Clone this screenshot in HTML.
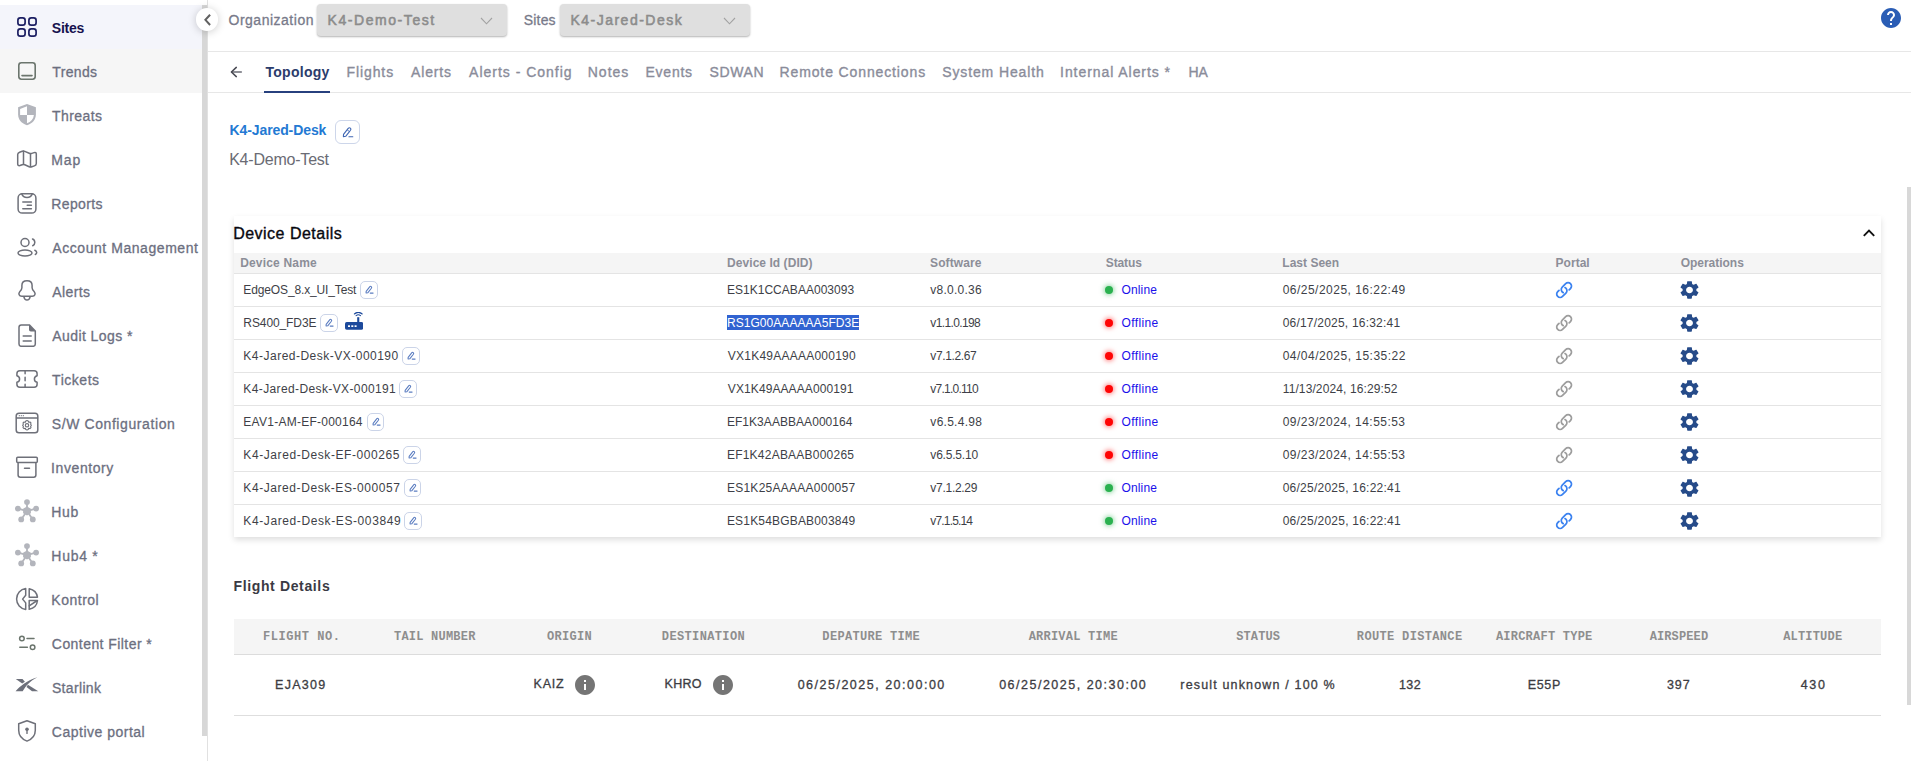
<!DOCTYPE html>
<html>
<head>
<meta charset="utf-8">
<title>Sites</title>
<style>
*{box-sizing:border-box;margin:0;padding:0}
html,body{width:1911px;height:761px;overflow:hidden;background:#fff}
body{font-family:"Liberation Sans",sans-serif;position:relative;color:#3f4048}
.a{position:absolute}
.t{position:absolute;white-space:nowrap;line-height:1}
.m{font-family:"Liberation Mono",monospace}
.b{font-weight:bold}
.nv{position:absolute;left:15px;width:24px;height:24px}
.sel{position:absolute;top:4px;height:31.500px;width:189.500px;background:#dfdfdf;border-radius:4px;box-shadow:0 1px 2px rgba(0,0,0,.3)}
.hl{position:absolute;left:208px;right:0;height:1px;background:#e7e7e7}
#card{position:absolute;left:233.500px;top:216px;width:1647.500px;height:321px;background:#fff;box-shadow:0 2.500px 6px rgba(0,0,0,.13)}
.rl{position:absolute;left:234px;width:1647px;height:1px;background:#e4e4e4}
.eb{position:absolute;width:17.500px;height:17.500px;border:1px solid #cbd4e8;border-radius:5px;background:#fff}
.dot{position:absolute;left:1104.700px;width:8.500px;height:8.500px;border-radius:50%}
.on{background:#2ab14f;box-shadow:0 0 5px 1px rgba(42,177,79,.55)}
.off{background:#ff0505;box-shadow:0 0 5px 1px rgba(255,5,5,.55)}
</style>
</head>
<body>
<div id="side">
<div class="a" style="left:0;top:5px;width:202px;height:44px;background:#f4f5fb"></div>
<div class="a" style="left:0;top:49px;width:202px;height:44px;background:#f6f6f6"></div>
<svg class="nv" style="top:15px" viewBox="0 0 24 24"><g fill="none" stroke="#1c1f63" stroke-width="1.7"><rect x="2.9" y="2.9" width="7.2" height="7.2" rx="2.4"/><rect x="13.9" y="2.9" width="7.2" height="7.2" rx="2.4"/><rect x="2.9" y="13.9" width="7.2" height="7.2" rx="2.4"/><rect x="13.9" y="13.9" width="7.2" height="7.2" rx="2.4"/></g></svg>
<svg class="nv" style="top:59px" viewBox="0 0 24 24"><g fill="none" stroke="#6b756d" stroke-width="1.6" stroke-linecap="round"><rect x="3.8" y="3.8" width="16.4" height="16.4" rx="2.6"/><path d="M7 16.6h10"/></g></svg>
<svg class="nv" style="top:103px" viewBox="0 0 24 24"><path d="M12 .9 3.100 4.300v6.900c0 5.400 3.600 9.300 8.900 11.100 5.300-1.800 8.900-5.700 8.900-11.100V4.300z" fill="#b3b5bc"/><path d="M12 3.300v8.600H5.100V5.900z M12 11.900h6.900c-.3 3.900-2.900 6.700-6.900 8.400z" fill="#fff"/></svg>
<svg class="nv" style="top:147px" viewBox="0 0 24 24"><g fill="none" stroke="#6e7079" stroke-width="1.5" stroke-linecap="round" stroke-linejoin="round"><path d="M2.700 7.600c0-1.300.7-2 1.900-2.400l2.600-.9c.9-.3 1.700-.3 2.600.1l4.400 1.900c.9.4 1.700.4 2.600.1l2.300-.8c1.300-.4 2.200.2 2.200 1.600v9.300c0 1.300-.7 2-1.900 2.400l-2.600.9c-.9.300-1.700.3-2.600-.1l-4.400-1.900c-.9-.4-1.700-.4-2.600-.1l-2.300.8c-1.300.4-2.200-.2-2.200-1.600z"/><path d="M8.500 4.300v12.800M15.500 6.700v12.900"/></g></svg>
<svg class="nv" style="top:191px" viewBox="0 0 24 24"><g fill="none" stroke="#6e7079" stroke-width="1.5" stroke-linecap="round" stroke-linejoin="round"><rect x="3.100" y="2.700" width="17.800" height="19.400" rx="4.200"/><path d="M6.800 3c.8 2.300 2.600 3.500 5.200 3.500s4.400-1.200 5.200-3.500"/><path d="M7.800 10.900h8.600M12.200 14.300h4.200M7.800 17.800h8.600"/></g></svg>
<svg class="nv" style="top:235px" viewBox="0 0 24 24"><g fill="none" stroke="#6e7079" stroke-width="1.5" stroke-linecap="round" stroke-linejoin="round"><circle cx="10" cy="7.500" r="4"/><ellipse cx="10" cy="18" rx="7" ry="3"/><path d="M17.500 4c1.500.5 2.300 1.900 2.300 3.400s-.8 2.700-2.100 3.300"/><path d="M19.800 15.300c1.200.5 1.900 1.300 1.900 2.200 0 .8-.5 1.500-1.400 2"/></g></svg>
<svg class="nv" style="top:279px" viewBox="0 0 24 24"><g fill="none" stroke="#6e7079" stroke-width="1.5" stroke-linecap="round" stroke-linejoin="round"><path d="M12 1.700C8.600 1.700 6.900 3.600 6.900 6.400V8.800C6.900 10.600 5.600 11.800 4.600 12.900 3.200 14.500 4 17.300 6.800 17.300H17.200C20 17.300 20.800 14.500 19.400 12.900 18.400 11.800 17.100 10.600 17.100 8.800V6.400C17.100 3.600 15.400 1.700 12 1.700z"/><path d="M8.800 17.700c.5 2.300 1.700 3.400 3.200 3.400s2.700-1.100 3.200-3.400"/></g></svg>
<svg class="nv" style="top:323px" viewBox="0 0 24 24"><g fill="none" stroke="#6e7079" stroke-width="1.5" stroke-linecap="round" stroke-linejoin="round" stroke-width="1.600"><path d="M4 4.200c0-1.400.9-2.300 2.300-2.300h8L20.300 8v13c0 1.400-.9 2.300-2.300 2.300H6.300c-1.400 0-2.300-.9-2.300-2.300z"/><path d="M8.200 13h8M8.200 18h8"/></g><path d="M14 2v4.500c0 1.200.7 1.900 1.900 1.900h4.400z" fill="#6e7079"/></svg>
<svg class="nv" style="top:367px" viewBox="0 0 24 24"><g fill="none" stroke="#6e7079" stroke-width="1.5" stroke-linecap="round" stroke-linejoin="round"><path d="M4.900 3.800h14.200c1.800 0 3 1.200 3 3v1.900c-1.700.4-2.700 1.600-2.700 3.300s1 2.900 2.700 3.300v1.900c0 1.800-1.200 3-3 3H4.900c-1.800 0-3-1.200-3-3v-1.900c1.700-.4 2.700-1.600 2.700-3.300S3.600 9.100 1.900 8.700V6.800c0-1.800 1.200-3 3-3z"/><path d="M10.100 4v2.800M10.100 10.300v3.400M10.100 17.200V20"/></g></svg>
<svg class="nv" style="top:411px" viewBox="0 0 24 24"><g fill="none" stroke="#6e7079" stroke-width="1.5" stroke-linecap="round" stroke-linejoin="round" stroke-width="1.400"><rect x="1.200" y="2.300" width="21.600" height="19.400" rx="2.800"/><path d="M1.500 7h21"/><circle cx="12" cy="14.300" r="1.700" stroke-width="1.100"/><path stroke-width="1.100" d="M12 9.600l1.200.4.500 1.300 1.300-.3 1 .9-.4 1.300.8 1.100-.8 1.100.4 1.300-1 .9-1.300-.3-.5 1.300-1.200.4-1.200-.4-.5-1.300-1.300.3-1-.9.400-1.300-.8-1.100.8-1.100-.4-1.300 1-.9 1.300.3.500-1.300z"/></g><g fill="#6e7079"><circle cx="4.300" cy="4.700" r=".6"/><circle cx="6.300" cy="4.700" r=".6"/><circle cx="8.300" cy="4.700" r=".6"/></g></svg>
<svg class="nv" style="top:455px" viewBox="0 0 24 24"><g fill="none" stroke="#6e7079" stroke-width="1.5" stroke-linecap="round" stroke-linejoin="round" stroke-width="1.700"><rect x="1.700" y="2.300" width="20.600" height="5.300" rx="1"/><path d="M3.100 7.800v12.300c0 1.400.8 2.200 2.200 2.200h13.400c1.400 0 2.200-.8 2.200-2.200V7.800"/><path d="M9.500 13.200h5"/></g></svg>
<svg class="nv" style="top:499px" viewBox="0 0 24 24"><g stroke="#b3b5bc" stroke-width="1.800" stroke-linecap="round"><path d="M12 12.100V3.500M12 12.100 3.300 9.600M12 12.100l8.700-2.500M12 12.100 6.400 20.200M12 12.100l5.600 8.100"/></g><g fill="#b3b5bc"><path d="M12 7.600l3.900 2.200v4.500L12 16.600l-3.900-2.300V9.800z"/><circle cx="12" cy="3.100" r="2.900"/><circle cx="2.900" cy="9.600" r="2.900"/><circle cx="21.100" cy="9.600" r="2.900"/><circle cx="6.200" cy="20.400" r="2.900"/><circle cx="17.800" cy="20.400" r="2.900"/></g></svg>
<svg class="nv" style="top:543px" viewBox="0 0 24 24"><g stroke="#b3b5bc" stroke-width="1.800" stroke-linecap="round"><path d="M12 12.100V3.500M12 12.100 3.300 9.600M12 12.100l8.700-2.500M12 12.100 6.400 20.200M12 12.100l5.600 8.100"/></g><g fill="#b3b5bc"><path d="M12 7.600l3.900 2.200v4.500L12 16.600l-3.900-2.300V9.800z"/><circle cx="12" cy="3.100" r="2.900"/><circle cx="2.900" cy="9.600" r="2.900"/><circle cx="21.100" cy="9.600" r="2.900"/><circle cx="6.200" cy="20.400" r="2.900"/><circle cx="17.800" cy="20.400" r="2.900"/></g></svg>
<svg class="nv" style="top:587px" viewBox="0 0 24 24"><g fill="none" stroke="#6e7079" stroke-width="1.5" stroke-linecap="round" stroke-linejoin="round" stroke-width="1.700"><path d="M10.700 1.600C5.500 2.300 1.600 6.600 1.600 12s3.900 9.700 9.100 10.400V15.900L7.600 12.100l3.100-3.800z"/><path d="M14.200 1.700c4.400.9 7.700 4.100 8.300 8.500h-8.300z"/><path d="M14.200 13.500h8.300c-.5 4.400-3.800 7.900-8.300 8.800z"/><path d="M14.200 18.800l7.300-4.800"/></g></svg>
<svg class="nv" style="top:631px" viewBox="0 0 24 24"><g fill="none" stroke="#6b756d" stroke-width="1.500" stroke-linecap="round"><circle cx="6.900" cy="7.500" r="2.300"/><path d="M12 7.500h7"/><circle cx="17.600" cy="16.200" r="2.300"/><path d="M4.800 16.200h7.600"/></g></svg>
<svg class="nv" style="top:675px" viewBox="0 0 24 24"><g fill="#6d707b"><path d="M.6 16.300C5 11 12 5.500 22.400 2.200 15 6 10.500 11 7.700 16.300z"/><path d="M.8 4h6.700l2.400 2.800-2.700 1.600z"/><path d="M12.900 9.700 23.300 16.300H17l-5.500-4.400z"/></g></svg>
<svg class="nv" style="top:719px" viewBox="0 0 24 24"><g fill="none" stroke="#6e7079" stroke-width="1.5" stroke-linecap="round" stroke-linejoin="round"><path d="M12 1.700 3.700 4.800v6.500c0 5.200 3.300 9 8.300 10.800 5-1.800 8.300-5.600 8.300-10.800V4.800z"/></g><g fill="#6e7079"><circle cx="12" cy="10.300" r="1.800"/><rect x="11.300" y="10.800" width="1.400" height="4.200" rx=".6"/></g></svg>
<div class="a" style="left:202px;top:5px;width:5px;height:730.600px;background:#d7d7d7"></div>
<div class="a" style="left:207px;top:0;width:1px;height:761px;background:#e1e1e1"></div>
</div>
<div class="a" style="left:195.700px;top:7.900px;width:22.800px;height:22.800px;border-radius:50%;background:#fff;box-shadow:0 1px 8px rgba(0,0,0,.2)"></div>
<svg class="a" style="left:196px;top:8px" width="22" height="22" viewBox="0 0 22 22"><path d="M14.100 6.750 9.400 11.850 14.100 16.950" fill="none" stroke="#616161" stroke-width="2"/></svg>
<div class="sel" style="left:317.250px"></div>
<svg class="a" style="left:479.7px;top:16.500px" width="13" height="8" viewBox="0 0 13 8"><path d="M1 1 6.500 6.800 12 1" fill="none" stroke="#a2a2a2" stroke-width="1.100"/></svg>
<div class="sel" style="left:560px"></div>
<svg class="a" style="left:722.7px;top:16.500px" width="13" height="8" viewBox="0 0 13 8"><path d="M1 1 6.500 6.800 12 1" fill="none" stroke="#a2a2a2" stroke-width="1.100"/></svg>
<svg class="a" style="left:1879.100px;top:5.900px" width="24" height="24" viewBox="0 0 24 24"><path fill="#2a5db5" d="M12 2C6.480 2 2 6.480 2 12s4.480 10 10 10 10-4.480 10-10S17.520 2 12 2zm1 17h-2v-2h2v2zm2.070-7.750l-.9.920C13.450 12.900 13 13.500 13 15h-2v-.5c0-1.100.45-2.100 1.170-2.830l1.240-1.260c.37-.36.590-.86.590-1.410 0-1.100-.9-2-2-2s-2 .9-2 2H8c0-2.210 1.790-4 4-4s4 1.790 4 4c0 .880-.36 1.680-.93 2.250z"/></svg>
<div class="hl" style="top:51px"></div>
<div class="hl" style="top:92px"></div>
<svg class="a" style="left:229px;top:65px" width="14" height="14" viewBox="0 0 14 14"><path d="M12.400 7H2.600" fill="none" stroke="#6b6c76" stroke-width="1.300" stroke-linecap="round"/><path d="M7.300 2.400 2.400 7l4.900 4.600" fill="none" stroke="#484952" stroke-width="1.500" stroke-linecap="round" stroke-linejoin="round"/></svg>
<div class="a" style="left:264px;top:91.200px;width:65.800px;height:1.800px;background:#27407e"></div>
<div class="a" style="left:335.400px;top:119.600px;width:24.400px;height:24.400px;border:1.400px solid #cdd6ea;border-radius:6px"></div>
<svg class="a" style="left:341.500px;top:125.800px" width="12" height="12" viewBox="0 0 18 18"><path d="M2.300 12.700 9.300 3.700c.9-1.100 2.200-1.300 3.200-.5s1.100 2.100.3 3.200L5.800 15.300l-3.700.6z M10.400 16.200h5.800" fill="none" stroke="#3f66b3" stroke-width="1.700" stroke-linecap="round" stroke-linejoin="round"/><path d="M7.700 5.700l3.600 2.800" fill="none" stroke="#3f66b3" stroke-width="1.300"/></svg>
<div id="card"></div>
<svg class="a" style="left:1862px;top:227.600px" width="14" height="10" viewBox="0 0 14 10"><path d="M1.800 7.800 7 2.600l5.200 5.200" fill="none" stroke="#111" stroke-width="1.900"/></svg>
<div class="a" style="left:234px;top:253px;width:1647px;height:20px;background:#f5f5f5"></div>
<div class="rl" style="top:273px"></div>
<div class="eb" style="left:360.1px;top:281.3px"></div>
<svg class="a" style="left:365.1px;top:285.4px" width="9" height="9" viewBox="0 0 18 18"><path d="M2.300 12.700 9.300 3.700c.9-1.100 2.200-1.300 3.200-.5s1.100 2.100.3 3.200L5.800 15.300l-3.700.6z M10.400 16.200h5.800" fill="none" stroke="#5a7cc0" stroke-width="2.100" stroke-linecap="round" stroke-linejoin="round"/></svg>
<div class="dot on" style="top:285.73px"></div>
<svg class="a" style="left:1555.350px;top:280.5px" width="18.200" height="18.200" viewBox="0 0 24 24"><path fill="none" stroke="#3b82f0" stroke-width="2.300" stroke-linecap="round" stroke-linejoin="round" d="M13.190 8.688a4.500 4.500 0 0 1 1.242 7.244l-4.500 4.500a4.500 4.500 0 0 1-6.364-6.364l1.757-1.757m13.350-.622 1.757-1.757a4.500 4.500 0 0 0-6.364-6.364l-4.500 4.500a4.500 4.500 0 0 0 1.242 7.244"/></svg>
<svg class="a" style="left:1678.050px;top:279.1px" width="23.030" height="21.900" viewBox="0 0 24 24" preserveAspectRatio="none"><path fill="#264b89" d="M19.140 12.940c.04-.3.060-.61.060-.94 0-.32-.02-.64-.07-.94l2.030-1.580c.18-.14.230-.41.120-.61l-1.920-3.320c-.12-.22-.37-.29-.59-.22l-2.390.96c-.5-.38-1.030-.7-1.620-.94l-.36-2.540c-.04-.24-.24-.41-.48-.41h-3.840c-.24 0-.43.170-.47.410l-.36 2.540c-.59.240-1.130.57-1.620.94l-2.390-.96c-.22-.08-.47 0-.59.220L2.740 8.870c-.12.210-.08.470.12.610l2.030 1.580c-.05.300-.09.630-.09.940s.02.640.07.940l-2.030 1.580c-.18.140-.23.410-.12.610l1.920 3.320c.12.220.37.290.59.220l2.390-.96c.5.380 1.030.7 1.620.94l.36 2.540c.05.240.24.410.48.410h3.840c.24 0 .44-.17.470-.41l.36-2.540c.59-.24 1.130-.56 1.620-.94l2.390.96c.22.080.47 0 .59-.22l1.920-3.320c.12-.22.070-.47-.12-.61l-2.010-1.580zM12 15.600c-1.980 0-3.600-1.620-3.600-3.600s1.620-3.600 3.600-3.600 3.600 1.620 3.600 3.600-1.620 3.600-3.600 3.600z"/></svg>
<div class="rl" style="top:306px"></div>
<div class="eb" style="left:320.4px;top:314.3px"></div>
<svg class="a" style="left:325.4px;top:318.4px" width="9" height="9" viewBox="0 0 18 18"><path d="M2.300 12.700 9.300 3.700c.9-1.100 2.200-1.300 3.200-.5s1.100 2.100.3 3.200L5.800 15.300l-3.700.6z M10.400 16.200h5.800" fill="none" stroke="#5a7cc0" stroke-width="2.100" stroke-linecap="round" stroke-linejoin="round"/></svg>
<svg class="a" style="left:345px;top:312px" width="18.200" height="17.800" viewBox="0 0 18.200 17.800"><g fill="#1d4a9c"><rect x="0" y="10" width="18.200" height="7.800" rx="1.700"/><rect x="12.200" y="5.200" width="2.100" height="6"/></g><g fill="#fff"><rect x="3" y="13.300" width="2" height="1.700"/><rect x="6.300" y="13.300" width="2" height="1.700"/><rect x="9.600" y="13.300" width="2" height="1.700"/></g><g fill="none" stroke="#1d4a9c" stroke-width="1.100" stroke-linecap="round"><path d="M11.100 3.700c1.300-1.100 3.100-1.100 4.400 0"/><path d="M9.400 2c2.300-2 5.500-2 7.800 0"/></g></svg>
<div class="a" style="left:727px;top:315px;width:132px;height:15px;background:#3163d1"></div>
<div class="dot off" style="top:318.73px"></div>
<svg class="a" style="left:1555.350px;top:313.5px" width="18.200" height="18.200" viewBox="0 0 24 24"><path fill="none" stroke="#9d9d9d" stroke-width="2.300" stroke-linecap="round" stroke-linejoin="round" d="M13.190 8.688a4.500 4.500 0 0 1 1.242 7.244l-4.500 4.500a4.500 4.500 0 0 1-6.364-6.364l1.757-1.757m13.350-.622 1.757-1.757a4.500 4.500 0 0 0-6.364-6.364l-4.500 4.500a4.500 4.500 0 0 0 1.242 7.244"/></svg>
<svg class="a" style="left:1678.050px;top:312.1px" width="23.030" height="21.900" viewBox="0 0 24 24" preserveAspectRatio="none"><path fill="#264b89" d="M19.140 12.940c.04-.3.060-.61.060-.94 0-.32-.02-.64-.07-.94l2.030-1.580c.18-.14.230-.41.120-.61l-1.920-3.320c-.12-.22-.37-.29-.59-.22l-2.390.96c-.5-.38-1.030-.7-1.620-.94l-.36-2.540c-.04-.24-.24-.41-.48-.41h-3.840c-.24 0-.43.170-.47.410l-.36 2.540c-.59.240-1.130.57-1.620.94l-2.390-.96c-.22-.08-.47 0-.59.220L2.740 8.870c-.12.210-.08.470.12.610l2.030 1.580c-.05.300-.09.630-.09.940s.02.640.07.940l-2.030 1.580c-.18.140-.23.410-.12.610l1.920 3.320c.12.220.37.290.59.220l2.390-.96c.5.380 1.030.7 1.620.94l.36 2.540c.05.240.24.410.48.410h3.840c.24 0 .44-.17.470-.41l.36-2.540c.59-.24 1.130-.56 1.620-.94l2.390.96c.22.080.47 0 .59-.22l1.920-3.320c.12-.22.070-.47-.12-.61l-2.010-1.580zM12 15.600c-1.980 0-3.600-1.620-3.600-3.600s1.620-3.600 3.600-3.600 3.600 1.620 3.600 3.600-1.620 3.600-3.600 3.600z"/></svg>
<div class="rl" style="top:339px"></div>
<div class="eb" style="left:402px;top:347.3px"></div>
<svg class="a" style="left:407px;top:351.4px" width="9" height="9" viewBox="0 0 18 18"><path d="M2.300 12.700 9.300 3.700c.9-1.100 2.200-1.300 3.200-.5s1.100 2.100.3 3.200L5.800 15.300l-3.700.6z M10.400 16.200h5.800" fill="none" stroke="#5a7cc0" stroke-width="2.100" stroke-linecap="round" stroke-linejoin="round"/></svg>
<div class="dot off" style="top:351.73px"></div>
<svg class="a" style="left:1555.350px;top:346.5px" width="18.200" height="18.200" viewBox="0 0 24 24"><path fill="none" stroke="#9d9d9d" stroke-width="2.300" stroke-linecap="round" stroke-linejoin="round" d="M13.190 8.688a4.500 4.500 0 0 1 1.242 7.244l-4.500 4.500a4.500 4.500 0 0 1-6.364-6.364l1.757-1.757m13.350-.622 1.757-1.757a4.500 4.500 0 0 0-6.364-6.364l-4.500 4.500a4.500 4.500 0 0 0 1.242 7.244"/></svg>
<svg class="a" style="left:1678.050px;top:345.1px" width="23.030" height="21.900" viewBox="0 0 24 24" preserveAspectRatio="none"><path fill="#264b89" d="M19.140 12.940c.04-.3.060-.61.060-.94 0-.32-.02-.64-.07-.94l2.030-1.580c.18-.14.230-.41.120-.61l-1.920-3.320c-.12-.22-.37-.29-.59-.22l-2.390.96c-.5-.38-1.030-.7-1.620-.94l-.36-2.540c-.04-.24-.24-.41-.48-.41h-3.840c-.24 0-.43.170-.47.410l-.36 2.540c-.59.240-1.130.57-1.620.94l-2.390-.96c-.22-.08-.47 0-.59.220L2.740 8.870c-.12.210-.08.470.12.610l2.030 1.580c-.05.300-.09.630-.09.940s.02.640.07.940l-2.030 1.580c-.18.140-.23.410-.12.610l1.920 3.320c.12.220.37.290.59.220l2.390-.96c.5.380 1.030.7 1.620.94l.36 2.540c.05.240.24.410.48.410h3.840c.24 0 .44-.17.470-.41l.36-2.540c.59-.24 1.130-.56 1.620-.94l2.390.96c.22.080.47 0 .59-.22l1.920-3.320c.12-.22.070-.47-.12-.61l-2.010-1.580zM12 15.600c-1.980 0-3.600-1.620-3.600-3.600s1.620-3.600 3.600-3.600 3.600 1.620 3.600 3.600-1.620 3.600-3.600 3.600z"/></svg>
<div class="rl" style="top:372px"></div>
<div class="eb" style="left:399.3px;top:380.3px"></div>
<svg class="a" style="left:404.3px;top:384.4px" width="9" height="9" viewBox="0 0 18 18"><path d="M2.300 12.700 9.300 3.700c.9-1.100 2.200-1.300 3.200-.5s1.100 2.100.3 3.200L5.800 15.300l-3.700.6z M10.400 16.200h5.800" fill="none" stroke="#5a7cc0" stroke-width="2.100" stroke-linecap="round" stroke-linejoin="round"/></svg>
<div class="dot off" style="top:384.73px"></div>
<svg class="a" style="left:1555.350px;top:379.5px" width="18.200" height="18.200" viewBox="0 0 24 24"><path fill="none" stroke="#9d9d9d" stroke-width="2.300" stroke-linecap="round" stroke-linejoin="round" d="M13.190 8.688a4.500 4.500 0 0 1 1.242 7.244l-4.500 4.500a4.500 4.500 0 0 1-6.364-6.364l1.757-1.757m13.350-.622 1.757-1.757a4.500 4.500 0 0 0-6.364-6.364l-4.500 4.500a4.500 4.500 0 0 0 1.242 7.244"/></svg>
<svg class="a" style="left:1678.050px;top:378.1px" width="23.030" height="21.900" viewBox="0 0 24 24" preserveAspectRatio="none"><path fill="#264b89" d="M19.140 12.940c.04-.3.060-.61.060-.94 0-.32-.02-.64-.07-.94l2.030-1.580c.18-.14.230-.41.120-.61l-1.920-3.320c-.12-.22-.37-.29-.59-.22l-2.390.96c-.5-.38-1.030-.7-1.620-.94l-.36-2.540c-.04-.24-.24-.41-.48-.41h-3.840c-.24 0-.43.170-.47.410l-.36 2.540c-.59.240-1.130.57-1.620.94l-2.390-.96c-.22-.08-.47 0-.59.220L2.740 8.870c-.12.210-.08.470.12.610l2.030 1.580c-.05.300-.09.630-.09.940s.02.640.07.940l-2.030 1.580c-.18.140-.23.410-.12.610l1.920 3.320c.12.220.37.290.59.220l2.390-.96c.5.380 1.030.7 1.620.94l.36 2.540c.05.240.24.410.48.410h3.840c.24 0 .44-.17.470-.41l.36-2.540c.59-.24 1.130-.56 1.620-.94l2.390.96c.22.080.47 0 .59-.22l1.920-3.320c.12-.22.070-.47-.12-.61l-2.010-1.580zM12 15.600c-1.980 0-3.600-1.620-3.600-3.600s1.620-3.600 3.600-3.600 3.600 1.620 3.600 3.600-1.620 3.600-3.600 3.600z"/></svg>
<div class="rl" style="top:405px"></div>
<div class="eb" style="left:366.5px;top:413.3px"></div>
<svg class="a" style="left:371.5px;top:417.4px" width="9" height="9" viewBox="0 0 18 18"><path d="M2.300 12.700 9.300 3.700c.9-1.100 2.200-1.300 3.200-.5s1.100 2.100.3 3.200L5.800 15.300l-3.700.6z M10.400 16.200h5.800" fill="none" stroke="#5a7cc0" stroke-width="2.100" stroke-linecap="round" stroke-linejoin="round"/></svg>
<div class="dot off" style="top:417.73px"></div>
<svg class="a" style="left:1555.350px;top:412.5px" width="18.200" height="18.200" viewBox="0 0 24 24"><path fill="none" stroke="#9d9d9d" stroke-width="2.300" stroke-linecap="round" stroke-linejoin="round" d="M13.190 8.688a4.500 4.500 0 0 1 1.242 7.244l-4.500 4.500a4.500 4.500 0 0 1-6.364-6.364l1.757-1.757m13.350-.622 1.757-1.757a4.500 4.500 0 0 0-6.364-6.364l-4.500 4.500a4.500 4.500 0 0 0 1.242 7.244"/></svg>
<svg class="a" style="left:1678.050px;top:411.1px" width="23.030" height="21.900" viewBox="0 0 24 24" preserveAspectRatio="none"><path fill="#264b89" d="M19.140 12.940c.04-.3.060-.61.060-.94 0-.32-.02-.64-.07-.94l2.030-1.580c.18-.14.230-.41.120-.61l-1.920-3.320c-.12-.22-.37-.29-.59-.22l-2.390.96c-.5-.38-1.030-.7-1.620-.94l-.36-2.540c-.04-.24-.24-.41-.48-.41h-3.840c-.24 0-.43.170-.47.410l-.36 2.540c-.59.240-1.130.57-1.620.94l-2.390-.96c-.22-.08-.47 0-.59.220L2.740 8.870c-.12.210-.08.470.12.610l2.030 1.580c-.05.300-.09.630-.09.940s.02.640.07.940l-2.030 1.580c-.18.140-.23.410-.12.610l1.920 3.320c.12.220.37.290.59.220l2.390-.96c.5.380 1.030.7 1.620.94l.36 2.540c.05.240.24.410.48.410h3.840c.24 0 .44-.17.470-.41l.36-2.540c.59-.24 1.130-.56 1.620-.94l2.390.96c.22.080.47 0 .59-.22l1.920-3.320c.12-.22.070-.47-.12-.61l-2.010-1.580zM12 15.600c-1.980 0-3.600-1.620-3.600-3.600s1.620-3.600 3.600-3.600 3.600 1.620 3.600 3.600-1.620 3.600-3.600 3.600z"/></svg>
<div class="rl" style="top:438px"></div>
<div class="eb" style="left:403.2px;top:446.3px"></div>
<svg class="a" style="left:408.2px;top:450.4px" width="9" height="9" viewBox="0 0 18 18"><path d="M2.300 12.700 9.300 3.700c.9-1.100 2.200-1.300 3.200-.5s1.100 2.100.3 3.200L5.800 15.300l-3.700.6z M10.400 16.200h5.800" fill="none" stroke="#5a7cc0" stroke-width="2.100" stroke-linecap="round" stroke-linejoin="round"/></svg>
<div class="dot off" style="top:450.73px"></div>
<svg class="a" style="left:1555.350px;top:445.5px" width="18.200" height="18.200" viewBox="0 0 24 24"><path fill="none" stroke="#9d9d9d" stroke-width="2.300" stroke-linecap="round" stroke-linejoin="round" d="M13.190 8.688a4.500 4.500 0 0 1 1.242 7.244l-4.500 4.500a4.500 4.500 0 0 1-6.364-6.364l1.757-1.757m13.350-.622 1.757-1.757a4.500 4.500 0 0 0-6.364-6.364l-4.500 4.500a4.500 4.500 0 0 0 1.242 7.244"/></svg>
<svg class="a" style="left:1678.050px;top:444.1px" width="23.030" height="21.900" viewBox="0 0 24 24" preserveAspectRatio="none"><path fill="#264b89" d="M19.140 12.940c.04-.3.060-.61.060-.94 0-.32-.02-.64-.07-.94l2.030-1.580c.18-.14.230-.41.120-.61l-1.920-3.320c-.12-.22-.37-.29-.59-.22l-2.390.96c-.5-.38-1.030-.7-1.620-.94l-.36-2.540c-.04-.24-.24-.41-.48-.41h-3.840c-.24 0-.43.170-.47.410l-.36 2.540c-.59.240-1.130.57-1.620.94l-2.390-.96c-.22-.08-.47 0-.59.220L2.740 8.870c-.12.210-.08.470.12.610l2.030 1.580c-.05.300-.09.630-.09.940s.02.640.07.940l-2.030 1.580c-.18.140-.23.410-.12.610l1.920 3.320c.12.220.37.290.59.220l2.390-.96c.5.380 1.030.7 1.620.94l.36 2.540c.05.240.24.410.48.410h3.840c.24 0 .44-.17.470-.41l.36-2.540c.59-.24 1.130-.56 1.620-.94l2.390.96c.22.080.47 0 .59-.22l1.920-3.320c.12-.22.070-.47-.12-.61l-2.010-1.580zM12 15.600c-1.980 0-3.600-1.620-3.600-3.600s1.620-3.600 3.600-3.600 3.600 1.620 3.600 3.600-1.620 3.600-3.600 3.600z"/></svg>
<div class="rl" style="top:471px"></div>
<div class="eb" style="left:403.5px;top:479.3px"></div>
<svg class="a" style="left:408.5px;top:483.4px" width="9" height="9" viewBox="0 0 18 18"><path d="M2.300 12.700 9.300 3.700c.9-1.100 2.200-1.300 3.200-.5s1.100 2.100.3 3.200L5.800 15.300l-3.700.6z M10.400 16.200h5.800" fill="none" stroke="#5a7cc0" stroke-width="2.100" stroke-linecap="round" stroke-linejoin="round"/></svg>
<div class="dot on" style="top:483.73px"></div>
<svg class="a" style="left:1555.350px;top:478.5px" width="18.200" height="18.200" viewBox="0 0 24 24"><path fill="none" stroke="#3b82f0" stroke-width="2.300" stroke-linecap="round" stroke-linejoin="round" d="M13.190 8.688a4.500 4.500 0 0 1 1.242 7.244l-4.500 4.500a4.500 4.500 0 0 1-6.364-6.364l1.757-1.757m13.350-.622 1.757-1.757a4.500 4.500 0 0 0-6.364-6.364l-4.500 4.500a4.500 4.500 0 0 0 1.242 7.244"/></svg>
<svg class="a" style="left:1678.050px;top:477.1px" width="23.030" height="21.900" viewBox="0 0 24 24" preserveAspectRatio="none"><path fill="#264b89" d="M19.140 12.940c.04-.3.060-.61.060-.94 0-.32-.02-.64-.07-.94l2.030-1.580c.18-.14.230-.41.120-.61l-1.920-3.320c-.12-.22-.37-.29-.59-.22l-2.390.96c-.5-.38-1.030-.7-1.620-.94l-.36-2.540c-.04-.24-.24-.41-.48-.41h-3.840c-.24 0-.43.170-.47.410l-.36 2.540c-.59.240-1.130.57-1.620.94l-2.390-.96c-.22-.08-.47 0-.59.220L2.740 8.870c-.12.210-.08.470.12.610l2.030 1.580c-.05.300-.09.630-.09.940s.02.640.07.940l-2.030 1.580c-.18.140-.23.410-.12.610l1.920 3.320c.12.220.37.290.59.220l2.390-.96c.5.380 1.030.7 1.620.94l.36 2.540c.05.240.24.410.48.410h3.840c.24 0 .44-.17.470-.41l.36-2.540c.59-.24 1.130-.56 1.620-.94l2.390.96c.22.080.47 0 .59-.22l1.920-3.320c.12-.22.070-.47-.12-.61l-2.010-1.580zM12 15.600c-1.980 0-3.600-1.620-3.600-3.600s1.620-3.600 3.600-3.600 3.600 1.620 3.600 3.600-1.620 3.600-3.600 3.600z"/></svg>
<div class="rl" style="top:504px"></div>
<div class="eb" style="left:404.3px;top:512.3px"></div>
<svg class="a" style="left:409.3px;top:516.4px" width="9" height="9" viewBox="0 0 18 18"><path d="M2.300 12.700 9.300 3.700c.9-1.100 2.200-1.300 3.200-.5s1.100 2.100.3 3.200L5.800 15.300l-3.700.6z M10.400 16.200h5.800" fill="none" stroke="#5a7cc0" stroke-width="2.100" stroke-linecap="round" stroke-linejoin="round"/></svg>
<div class="dot on" style="top:516.73px"></div>
<svg class="a" style="left:1555.350px;top:511.5px" width="18.200" height="18.200" viewBox="0 0 24 24"><path fill="none" stroke="#3b82f0" stroke-width="2.300" stroke-linecap="round" stroke-linejoin="round" d="M13.190 8.688a4.500 4.500 0 0 1 1.242 7.244l-4.500 4.500a4.500 4.500 0 0 1-6.364-6.364l1.757-1.757m13.350-.622 1.757-1.757a4.500 4.500 0 0 0-6.364-6.364l-4.500 4.500a4.500 4.500 0 0 0 1.242 7.244"/></svg>
<svg class="a" style="left:1678.050px;top:510.1px" width="23.030" height="21.900" viewBox="0 0 24 24" preserveAspectRatio="none"><path fill="#264b89" d="M19.140 12.940c.04-.3.060-.61.060-.94 0-.32-.02-.64-.07-.94l2.030-1.580c.18-.14.230-.41.120-.61l-1.920-3.320c-.12-.22-.37-.29-.59-.22l-2.390.96c-.5-.38-1.030-.7-1.620-.94l-.36-2.540c-.04-.24-.24-.41-.48-.41h-3.840c-.24 0-.43.170-.47.410l-.36 2.540c-.59.240-1.130.57-1.620.94l-2.390-.96c-.22-.08-.47 0-.59.220L2.740 8.870c-.12.210-.08.470.12.610l2.030 1.580c-.05.300-.09.630-.09.940s.02.640.07.940l-2.030 1.580c-.18.140-.23.410-.12.610l1.920 3.320c.12.220.37.290.59.220l2.390-.96c.5.380 1.030.7 1.620.94l.36 2.540c.05.240.24.410.48.410h3.840c.24 0 .44-.17.470-.41l.36-2.540c.59-.24 1.130-.56 1.620-.94l2.390.96c.22.080.47 0 .59-.22l1.920-3.320c.12-.22.070-.47-.12-.61l-2.010-1.580zM12 15.600c-1.980 0-3.600-1.620-3.600-3.600s1.620-3.600 3.600-3.600 3.600 1.620 3.600 3.600-1.620 3.600-3.600 3.600z"/></svg>
<div class="a" style="left:233.700px;top:619px;width:1647px;height:35px;background:#f5f5f5"></div>
<div class="a" style="left:233.700px;top:654px;width:1647px;height:1px;background:#dcdcdc"></div>
<div class="a" style="left:233.700px;top:715px;width:1647px;height:1px;background:#dedede"></div>
<svg class="a" style="left:573px;top:672.800px" width="24" height="24" viewBox="0 0 24 24"><path fill="#757575" d="M12 2C6.480 2 2 6.480 2 12s4.480 10 10 10 10-4.480 10-10S17.520 2 12 2zm1 15h-2v-6h2v6zm0-8h-2V7h2v2z"/></svg>
<svg class="a" style="left:711px;top:672.800px" width="24" height="24" viewBox="0 0 24 24"><path fill="#757575" d="M12 2C6.480 2 2 6.480 2 12s4.480 10 10 10 10-4.480 10-10S17.520 2 12 2zm1 15h-2v-6h2v6zm0-8h-2V7h2v2z"/></svg>
<div class="a" style="left:1907px;top:187px;width:4px;height:518px;background:#d8d8d8"></div>
<div class="t b" style="left:51.75px;top:21px;font-size:14px;color:#17124f;letter-spacing:-0.21px">Sites</div>
<div class="t" style="left:52.24px;top:65px;font-size:14px;color:#6c6f7f;letter-spacing:0.36px;-webkit-text-stroke:.3px #6c6f7f">Trends</div>
<div class="t" style="left:52.09px;top:109px;font-size:14px;color:#6c6f7f;letter-spacing:0.43px;-webkit-text-stroke:.3px #6c6f7f">Threats</div>
<div class="t" style="left:51.25px;top:153px;font-size:14px;color:#6c6f7f;letter-spacing:0.85px;-webkit-text-stroke:.3px #6c6f7f">Map</div>
<div class="t" style="left:51.25px;top:197px;font-size:14px;color:#6c6f7f;letter-spacing:0.39px;-webkit-text-stroke:.3px #6c6f7f">Reports</div>
<div class="t" style="left:52.37px;top:241px;font-size:14px;color:#6c6f7f;letter-spacing:0.55px;-webkit-text-stroke:.3px #6c6f7f">Account Management</div>
<div class="t" style="left:52.37px;top:285px;font-size:14px;color:#6c6f7f;letter-spacing:0.39px;-webkit-text-stroke:.3px #6c6f7f">Alerts</div>
<div class="t" style="left:52.37px;top:329px;font-size:14px;color:#6c6f7f;letter-spacing:0.41px;-webkit-text-stroke:.3px #6c6f7f">Audit Logs *</div>
<div class="t" style="left:52.09px;top:373px;font-size:14px;color:#6c6f7f;letter-spacing:0.53px;-webkit-text-stroke:.3px #6c6f7f">Tickets</div>
<div class="t" style="left:51.76px;top:417px;font-size:14px;color:#6c6f7f;letter-spacing:0.59px;-webkit-text-stroke:.3px #6c6f7f">S/W Configuration</div>
<div class="t" style="left:51.11px;top:461px;font-size:14px;color:#6c6f7f;letter-spacing:0.58px;-webkit-text-stroke:.3px #6c6f7f">Inventory</div>
<div class="t" style="left:51.25px;top:505px;font-size:14px;color:#6c6f7f;letter-spacing:0.63px;-webkit-text-stroke:.3px #6c6f7f">Hub</div>
<div class="t" style="left:51.3px;top:549px;font-size:14px;color:#6c6f7f;letter-spacing:0.74px;-webkit-text-stroke:.3px #6c6f7f">Hub4 *</div>
<div class="t" style="left:51.3px;top:593px;font-size:14px;color:#6c6f7f;letter-spacing:0.51px;-webkit-text-stroke:.3px #6c6f7f">Kontrol</div>
<div class="t" style="left:51.84px;top:637px;font-size:14px;color:#6c6f7f;letter-spacing:0.44px;-webkit-text-stroke:.3px #6c6f7f">Content Filter *</div>
<div class="t" style="left:51.91px;top:681px;font-size:14px;color:#6c6f7f;letter-spacing:0.34px;-webkit-text-stroke:.3px #6c6f7f">Starlink</div>
<div class="t" style="left:51.84px;top:725px;font-size:14px;color:#6c6f7f;letter-spacing:0.5px;-webkit-text-stroke:.3px #6c6f7f">Captive portal</div>
<div class="t" style="left:228.49px;top:13px;font-size:14px;color:#787a8a;letter-spacing:0.51px;-webkit-text-stroke:.3px #787a8a">Organization</div>
<div class="t" style="left:327.5px;top:13px;font-size:14px;color:#8c8c8c;letter-spacing:1.57px;-webkit-text-stroke:.55px #8c8c8c">K4-Demo-Test</div>
<div class="t" style="left:523.76px;top:13px;font-size:14px;color:#787a8a;letter-spacing:0.18px;-webkit-text-stroke:.3px #787a8a">Sites</div>
<div class="t" style="left:570.5px;top:13px;font-size:14px;color:#8c8c8c;letter-spacing:1.48px;-webkit-text-stroke:.55px #8c8c8c">K4-Jared-Desk</div>
<div class="t b" style="left:265.49px;top:65px;font-size:14px;color:#2b3c6c;letter-spacing:0.28px">Topology</div>
<div class="t" style="left:346.5px;top:65px;font-size:14px;color:#8a8c9a;letter-spacing:0.9px;-webkit-text-stroke:.35px #8a8c9a">Flights</div>
<div class="t" style="left:411.12px;top:65px;font-size:14px;color:#8a8c9a;letter-spacing:0.84px;-webkit-text-stroke:.35px #8a8c9a">Alerts</div>
<div class="t" style="left:469.12px;top:65px;font-size:14px;color:#8a8c9a;letter-spacing:0.98px;-webkit-text-stroke:.35px #8a8c9a">Alerts - Config</div>
<div class="t" style="left:587.75px;top:65px;font-size:14px;color:#8a8c9a;letter-spacing:1.01px;-webkit-text-stroke:.35px #8a8c9a">Notes</div>
<div class="t" style="left:645.5px;top:65px;font-size:14px;color:#8a8c9a;letter-spacing:0.76px;-webkit-text-stroke:.35px #8a8c9a">Events</div>
<div class="t" style="left:709.51px;top:65px;font-size:14px;color:#8a8c9a;letter-spacing:0.6px;-webkit-text-stroke:.35px #8a8c9a">SDWAN</div>
<div class="t" style="left:779.5px;top:65px;font-size:14px;color:#8a8c9a;letter-spacing:0.88px;-webkit-text-stroke:.35px #8a8c9a">Remote Connections</div>
<div class="t" style="left:942.26px;top:65px;font-size:14px;color:#8a8c9a;letter-spacing:0.87px;-webkit-text-stroke:.35px #8a8c9a">System Health</div>
<div class="t" style="left:1060.06px;top:65px;font-size:14px;color:#8a8c9a;letter-spacing:0.94px;-webkit-text-stroke:.35px #8a8c9a">Internal Alerts *</div>
<div class="t" style="left:1188.4px;top:65px;font-size:14px;color:#8a8c9a;letter-spacing:0.08px;-webkit-text-stroke:.35px #8a8c9a">HA</div>
<div class="t b" style="left:229.51px;top:123px;font-size:14px;color:#2379d3;letter-spacing:-0.1px">K4-Jared-Desk</div>
<div class="t" style="left:229.14px;top:152px;font-size:16px;color:#6a6b74;letter-spacing:-0.21px">K4-Demo-Test</div>
<div class="t" style="left:233.14px;top:226px;font-size:16px;color:#08080f;letter-spacing:0.49px;-webkit-text-stroke:.35px #08080f">Device Details</div>
<div class="t b" style="left:240.15px;top:257px;font-size:12px;color:#8c8e98;letter-spacing:0.18px">Device Name</div>
<div class="t b" style="left:727.1px;top:257px;font-size:12px;color:#8c8e98;letter-spacing:0.05px">Device Id (DID)</div>
<div class="t b" style="left:930.05px;top:257px;font-size:12px;color:#8c8e98;letter-spacing:0.11px">Software</div>
<div class="t b" style="left:1105.8px;top:257px;font-size:12px;color:#8c8e98;letter-spacing:-0.13px">Status</div>
<div class="t b" style="left:1282.35px;top:257px;font-size:12px;color:#8c8e98;letter-spacing:0.01px">Last Seen</div>
<div class="t b" style="left:1555.6px;top:257px;font-size:12px;color:#8c8e98;letter-spacing:0.02px">Portal</div>
<div class="t b" style="left:1680.66px;top:257px;font-size:12px;color:#8c8e98;letter-spacing:-0.02px">Operations</div>
<div class="t" style="left:243.37px;top:284px;font-size:12px;color:#3e3f47;letter-spacing:-0.14px">EdgeOS_8.x_UI_Test</div>
<div class="t" style="left:726.92px;top:284px;font-size:12px;color:#3e3f47;letter-spacing:0.03px">ES1K1CCABAA003093</div>
<div class="t" style="left:930.36px;top:284px;font-size:12px;color:#3e3f47;letter-spacing:0.24px">v8.0.0.36</div>
<div class="t" style="left:1121.58px;top:284px;font-size:12px;color:#1b10ea;letter-spacing:0.12px">Online</div>
<div class="t" style="left:1282.68px;top:284px;font-size:12px;color:#3e3f47;letter-spacing:0.48px">06/25/2025, 16:22:49</div>
<div class="t" style="left:243.37px;top:317px;font-size:12px;color:#3e3f47;letter-spacing:-0.1px">RS400_FD3E</div>
<div class="t" style="left:726.92px;top:317px;font-size:12px;color:#ffffff;letter-spacing:0.06px">RS1G00AAAAAA5FD3E</div>
<div class="t" style="left:930.36px;top:317px;font-size:12px;color:#3e3f47;letter-spacing:-0.64px">v1.1.0.198</div>
<div class="t" style="left:1121.58px;top:317px;font-size:12px;color:#1b10ea;letter-spacing:0.35px">Offline</div>
<div class="t" style="left:1282.68px;top:317px;font-size:12px;color:#3e3f47;letter-spacing:0.21px">06/17/2025, 16:32:41</div>
<div class="t" style="left:243.37px;top:350px;font-size:12px;color:#3e3f47;letter-spacing:0.49px">K4-Jared-Desk-VX-000190</div>
<div class="t" style="left:727.85px;top:350px;font-size:12px;color:#3e3f47;letter-spacing:0.23px">VX1K49AAAAA000190</div>
<div class="t" style="left:930.36px;top:350px;font-size:12px;color:#3e3f47;letter-spacing:-0.38px">v7.1.2.67</div>
<div class="t" style="left:1121.58px;top:350px;font-size:12px;color:#1b10ea;letter-spacing:0.35px">Offline</div>
<div class="t" style="left:1282.68px;top:350px;font-size:12px;color:#3e3f47;letter-spacing:0.49px">04/04/2025, 15:35:22</div>
<div class="t" style="left:243.37px;top:383px;font-size:12px;color:#3e3f47;letter-spacing:0.38px">K4-Jared-Desk-VX-000191</div>
<div class="t" style="left:727.85px;top:383px;font-size:12px;color:#3e3f47;letter-spacing:0.09px">VX1K49AAAAA000191</div>
<div class="t" style="left:930.36px;top:383px;font-size:12px;color:#3e3f47;letter-spacing:-0.77px">v7.1.0.110</div>
<div class="t" style="left:1121.58px;top:383px;font-size:12px;color:#1b10ea;letter-spacing:0.35px">Offline</div>
<div class="t" style="left:1282.74px;top:383px;font-size:12px;color:#3e3f47;letter-spacing:0.11px">11/13/2024, 16:29:52</div>
<div class="t" style="left:243.37px;top:416px;font-size:12px;color:#3e3f47;letter-spacing:0.25px">EAV1-AM-EF-000164</div>
<div class="t" style="left:726.92px;top:416px;font-size:12px;color:#3e3f47;letter-spacing:0.05px">EF1K3AABBAA000164</div>
<div class="t" style="left:930.36px;top:416px;font-size:12px;color:#3e3f47;letter-spacing:0.27px">v6.5.4.98</div>
<div class="t" style="left:1121.58px;top:416px;font-size:12px;color:#1b10ea;letter-spacing:0.35px">Offline</div>
<div class="t" style="left:1282.68px;top:416px;font-size:12px;color:#3e3f47;letter-spacing:0.47px">09/23/2024, 14:55:53</div>
<div class="t" style="left:243.37px;top:449px;font-size:12px;color:#3e3f47;letter-spacing:0.58px">K4-Jared-Desk-EF-000265</div>
<div class="t" style="left:726.92px;top:449px;font-size:12px;color:#3e3f47;letter-spacing:0.23px">EF1K42ABAAB000265</div>
<div class="t" style="left:930.36px;top:449px;font-size:12px;color:#3e3f47;letter-spacing:-0.21px">v6.5.5.10</div>
<div class="t" style="left:1121.58px;top:449px;font-size:12px;color:#1b10ea;letter-spacing:0.35px">Offline</div>
<div class="t" style="left:1282.68px;top:449px;font-size:12px;color:#3e3f47;letter-spacing:0.47px">09/23/2024, 14:55:53</div>
<div class="t" style="left:243.37px;top:482px;font-size:12px;color:#3e3f47;letter-spacing:0.57px">K4-Jared-Desk-ES-000057</div>
<div class="t" style="left:726.92px;top:482px;font-size:12px;color:#3e3f47;letter-spacing:0.26px">ES1K25AAAAA000057</div>
<div class="t" style="left:930.36px;top:482px;font-size:12px;color:#3e3f47;letter-spacing:-0.29px">v7.1.2.29</div>
<div class="t" style="left:1121.58px;top:482px;font-size:12px;color:#1b10ea;letter-spacing:0.12px">Online</div>
<div class="t" style="left:1282.68px;top:482px;font-size:12px;color:#3e3f47;letter-spacing:0.24px">06/25/2025, 16:22:41</div>
<div class="t" style="left:243.37px;top:515px;font-size:12px;color:#3e3f47;letter-spacing:0.6px">K4-Jared-Desk-ES-003849</div>
<div class="t" style="left:726.92px;top:515px;font-size:12px;color:#3e3f47;letter-spacing:0.18px">ES1K54BGBAB003849</div>
<div class="t" style="left:930.36px;top:515px;font-size:12px;color:#3e3f47;letter-spacing:-0.85px">v7.1.5.14</div>
<div class="t" style="left:1121.58px;top:515px;font-size:12px;color:#1b10ea;letter-spacing:0.12px">Online</div>
<div class="t" style="left:1282.68px;top:515px;font-size:12px;color:#3e3f47;letter-spacing:0.24px">06/25/2025, 16:22:41</div>
<div class="t b" style="left:233.46px;top:579px;font-size:14px;color:#3a3a44;letter-spacing:0.64px">Flight Details</div>
<div class="t b m" style="left:262.92px;top:631px;font-size:12px;color:#8e8e8e;letter-spacing:0.55px">FLIGHT NO.</div>
<div class="t b m" style="left:394.04px;top:631px;font-size:12px;color:#8e8e8e;letter-spacing:0.21px">TAIL NUMBER</div>
<div class="t b m" style="left:546.98px;top:631px;font-size:12px;color:#8e8e8e;letter-spacing:0.29px">ORIGIN</div>
<div class="t b m" style="left:661.86px;top:631px;font-size:12px;color:#8e8e8e;letter-spacing:0.36px">DESTINATION</div>
<div class="t b m" style="left:822.36px;top:631px;font-size:12px;color:#8e8e8e;letter-spacing:0.32px">DEPATURE TIME</div>
<div class="t b m" style="left:1028.65px;top:631px;font-size:12px;color:#8e8e8e;letter-spacing:0.23px">ARRIVAL TIME</div>
<div class="t b m" style="left:1236.18px;top:631px;font-size:12px;color:#8e8e8e;letter-spacing:0.12px">STATUS</div>
<div class="t b m" style="left:1356.85px;top:631px;font-size:12px;color:#8e8e8e;letter-spacing:0.34px">ROUTE DISTANCE</div>
<div class="t b m" style="left:1495.9px;top:631px;font-size:12px;color:#8e8e8e;letter-spacing:0.23px">AIRCRAFT TYPE</div>
<div class="t b m" style="left:1649.65px;top:631px;font-size:12px;color:#8e8e8e;letter-spacing:0.12px">AIRSPEED</div>
<div class="t b m" style="left:1783.15px;top:631px;font-size:12px;color:#8e8e8e;letter-spacing:0.19px">ALTITUDE</div>
<div class="t" style="left:275.12px;top:679px;font-size:12.5px;color:#3c3c42;letter-spacing:1.26px;-webkit-text-stroke:.3px #3c3c42">EJA309</div>
<div class="t" style="left:533.62px;top:678px;font-size:12.5px;color:#3c3c42;letter-spacing:0.78px;-webkit-text-stroke:.3px #3c3c42">KAIZ</div>
<div class="t" style="left:664.62px;top:678px;font-size:12.5px;color:#3c3c42;letter-spacing:0.24px;-webkit-text-stroke:.3px #3c3c42">KHRO</div>
<div class="t" style="left:797.66px;top:679px;font-size:12.5px;color:#3c3c42;letter-spacing:1.5px;-webkit-text-stroke:.3px #3c3c42">06/25/2025, 20:00:00</div>
<div class="t" style="left:999.16px;top:679px;font-size:12.5px;color:#3c3c42;letter-spacing:1.5px;-webkit-text-stroke:.3px #3c3c42">06/25/2025, 20:30:00</div>
<div class="t" style="left:1180.32px;top:679px;font-size:12.5px;color:#3c3c42;letter-spacing:1.16px;-webkit-text-stroke:.3px #3c3c42">result unknown / 100 %</div>
<div class="t" style="left:1398.95px;top:679px;font-size:12.5px;color:#3c3c42;letter-spacing:0.46px;-webkit-text-stroke:.3px #3c3c42">132</div>
<div class="t" style="left:1527.87px;top:679px;font-size:12.5px;color:#3c3c42;letter-spacing:0.6px;-webkit-text-stroke:.3px #3c3c42">E55P</div>
<div class="t" style="left:1666.92px;top:679px;font-size:12.5px;color:#3c3c42;letter-spacing:0.97px;-webkit-text-stroke:.3px #3c3c42">397</div>
<div class="t" style="left:1800.86px;top:679px;font-size:12.5px;color:#3c3c42;letter-spacing:1.56px;-webkit-text-stroke:.3px #3c3c42">430</div>
</body>
</html>
